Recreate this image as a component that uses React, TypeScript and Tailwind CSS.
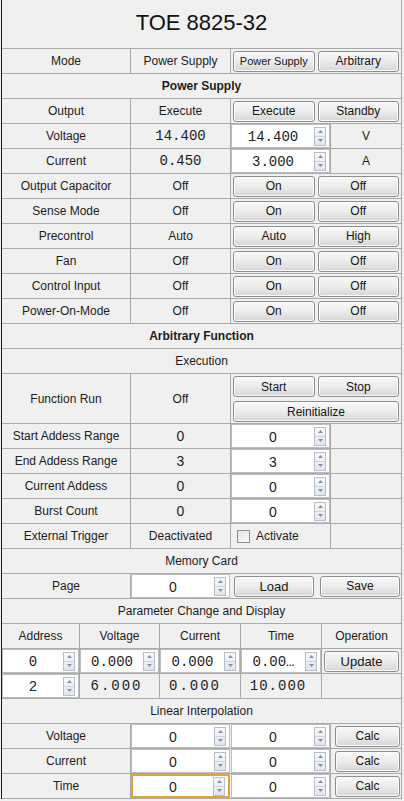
import type { ReactNode } from 'react'

const LINE = 'border-[#a9a9a9]'

function Btn({ children, className = '' }: { children: ReactNode; className?: string }) {
  return (
    <button
      className={`h-[21px] rounded-[3px] border border-[#8e8e8e] bg-linear-to-b from-[#f9f9f9] via-[#ececec] to-[#d6d6d6] leading-none text-[#161616] shadow-[inset_0_0_0_1px_#fbfbfb] ${className}`}
    >
      {children}
    </button>
  )
}

function Arrows() {
  return (
    <div className="mr-[3px] flex h-[19px] w-[12px] shrink-0 flex-col border border-[#b8bfca] bg-linear-to-b from-[#f8f9fb] to-[#e2e6ec]">
      <div className="flex flex-1 items-center justify-center border-b border-[#cdd3db]">
        <svg width="5" height="3" viewBox="0 0 5 3">
          <polygon points="0,3 2.5,0 5,3" fill="#8391a6" />
        </svg>
      </div>
      <div className="flex flex-1 items-center justify-center">
        <svg width="5" height="3" viewBox="0 0 5 3">
          <polygon points="0,0 5,0 2.5,3" fill="#8391a6" />
        </svg>
      </div>
    </div>
  )
}

function Spin({ value, mono, focus }: { value: string; mono?: boolean; focus?: boolean }) {
  return (
    <div
      className={`flex h-full w-full items-center bg-white ${focus ? 'border-2 border-[#e1a33b]' : 'border border-[#bdbdbd]'}`}
    >
      <span
        className={`flex-1 truncate pt-[2px] text-center text-[#222] ${mono ? "font-['Liberation_Mono',monospace] text-[14px]" : 'text-[14px]'}`}
      >
        {value}
      </span>
      <Arrows />
    </div>
  )
}

function Row({ children, tall }: { children: ReactNode; tall?: boolean }) {
  return <div className={`flex ${tall ? 'h-[50px]' : 'h-[25px]'} border-b ${LINE}`}>{children}</div>
}

function Header({ children, bold }: { children: ReactNode; bold?: boolean }) {
  return (
    <Row>
      <div className={`flex flex-1 items-center justify-center ${bold ? 'font-bold' : ''}`}>{children}</div>
    </Row>
  )
}

const c1 = `flex w-[129px] shrink-0 items-center justify-center border-r ${LINE}`
const c2 = `flex w-[100px] shrink-0 items-center justify-center border-r ${LINE}`
const c3 = `flex w-[100px] shrink-0 items-center justify-center border-r ${LINE}`
const c4 = 'flex flex-1 items-center justify-center'
const mono = "font-['Liberation_Mono',monospace] text-[14px]"

function Toggle({ label, value, a, b, small }: { label: string; value: string; a: string; b: string; small?: boolean }) {
  return (
    <Row>
      <div className={c1}>{label}</div>
      <div className={c2}>{value}</div>
      <div className="flex flex-1 items-center gap-[3px] px-[2px]">
        <Btn className={`flex-1 ${small ? 'text-[11px]' : 'text-[12px]'}`}>{a}</Btn>
        <Btn className="flex-1 text-[12px]">{b}</Btn>
      </div>
    </Row>
  )
}

function NumRow({ label, value }: { label: string; value: string }) {
  return (
    <Row>
      <div className={c1}>{label}</div>
      <div className={`${c2} text-[14px]`}>{value}</div>
      <div className={c3}>
        <Spin value={value} />
      </div>
      <div className={c4} />
    </Row>
  )
}

function LinRow({ label, focus }: { label: string; focus?: boolean }) {
  return (
    <Row>
      <div className={c1}>{label}</div>
      <div className={`${c2} border-r-0 pr-[1px]`}>
        <Spin value="0" focus={focus} />
      </div>
      <div className={c3}>
        <Spin value="0" />
      </div>
      <div className="flex flex-1 items-center pl-[4px] pr-[1px]">
        <Btn className="w-full text-[12px]">Calc</Btn>
      </div>
    </Row>
  )
}

const p1 = `flex w-[78px] shrink-0 items-center justify-center border-r ${LINE}`
const p2 = `flex w-[80px] shrink-0 items-center justify-center border-r ${LINE}`
const p3 = `flex w-[81px] shrink-0 items-center justify-center border-r ${LINE}`

export default function App() {
  return (
    <div className="h-[801px] w-[404px] bg-[#f0f0f0] pl-[1px] font-['Liberation_Sans',Arial,sans-serif] text-[12px] text-[#1c1c1c]">
      <div className="w-[401px] border-l border-r border-l-[#1a1a1a] border-r-[#a9a9a9]">
        {/* Title */}
        <div className={`flex h-[49px] items-center justify-center border-b ${LINE} pb-[4px] text-[22px] text-[#111]`}>
          TOE 8825-32
        </div>

        <Toggle label="Mode" value="Power Supply" a="Power Supply" b="Arbitrary" small />
        <Header bold>Power Supply</Header>
        <Toggle label="Output" value="Execute" a="Execute" b="Standby" />
        <Row>
          <div className={c1}>Voltage</div>
          <div className={`${c2} ${mono}`}>14.400</div>
          <div className={c3}>
            <Spin value="14.400" mono />
          </div>
          <div className={c4}>V</div>
        </Row>
        <Row>
          <div className={c1}>Current</div>
          <div className={`${c2} ${mono}`}>0.450</div>
          <div className={c3}>
            <Spin value="3.000" mono />
          </div>
          <div className={c4}>A</div>
        </Row>
        <Toggle label="Output Capacitor" value="Off" a="On" b="Off" />
        <Toggle label="Sense Mode" value="Off" a="On" b="Off" />
        <Toggle label="Precontrol" value="Auto" a="Auto" b="High" />
        <Toggle label="Fan" value="Off" a="On" b="Off" />
        <Toggle label="Control Input" value="Off" a="On" b="Off" />
        <Toggle label="Power-On-Mode" value="Off" a="On" b="Off" />

        <Header bold>Arbitrary Function</Header>
        <Header>Execution</Header>
        <Row tall>
          <div className={c1}>Function Run</div>
          <div className={c2}>Off</div>
          <div className="flex flex-1 flex-col gap-[4px] px-[2px] pt-[2px]">
            <div className="flex gap-[3px]">
              <Btn className="flex-1 text-[12px]">Start</Btn>
              <Btn className="flex-1 text-[12px]">Stop</Btn>
            </div>
            <Btn className="w-full text-[12px]">Reinitialize</Btn>
          </div>
        </Row>
        <NumRow label="Start Addess Range" value="0" />
        <NumRow label="End Addess Range" value="3" />
        <NumRow label="Current Addess" value="0" />
        <NumRow label="Burst Count" value="0" />
        <Row>
          <div className={c1}>External Trigger</div>
          <div className={c2}>Deactivated</div>
          <div className={`${c3} justify-start gap-[6px] pl-[6px]`}>
            <span className="h-[13px] w-[13px] border border-[#8f8f8f] bg-linear-to-br from-[#e4e4e4] to-[#fafafa]" />
            <span>Activate</span>
          </div>
          <div className={c4} />
        </Row>

        <Header>Memory Card</Header>
        <Row>
          <div className={c1}>Page</div>
          <div className={`${c2} border-r-0 pr-[1px]`}>
            <Spin value="0" />
          </div>
          <div className="flex flex-1 items-center gap-[6px] pl-[3px] pr-[1px]">
            <Btn className="flex-1 text-[13px]">Load</Btn>
            <Btn className="flex-1 text-[12px]">Save</Btn>
          </div>
        </Row>

        <Header>Parameter Change and Display</Header>
        <Row>
          <div className={p1}>Address</div>
          <div className={p2}>Voltage</div>
          <div className={p3}>Current</div>
          <div className={p3}>Time</div>
          <div className={c4}>Operation</div>
        </Row>
        <Row>
          <div className={p1}>
            <Spin value="0" mono />
          </div>
          <div className={p2}>
            <Spin value="0.000" mono />
          </div>
          <div className={p3}>
            <Spin value="0.000" mono />
          </div>
          <div className={p3}>
            <Spin value="0.00…" mono />
          </div>
          <div className="flex flex-1 items-center px-[2px]">
            <Btn className="w-full text-[13px]">Update</Btn>
          </div>
        </Row>
        <Row>
          <div className={p1}>
            <Spin value="2" mono />
          </div>
          <div className={`${p2} pr-[6px] tracking-[2px] ${mono}`}>6.000</div>
          <div className={`${p3} pr-[10px] tracking-[2px] ${mono}`}>0.000</div>
          <div className={`${p3} pr-[6px] tracking-[1px] ${mono}`}>10.000</div>
          <div className={c4} />
        </Row>

        <Header>Linear Interpolation</Header>
        <LinRow label="Voltage" />
        <LinRow label="Current" />
        <LinRow label="Time" focus />
      </div>
    </div>
  )
}
